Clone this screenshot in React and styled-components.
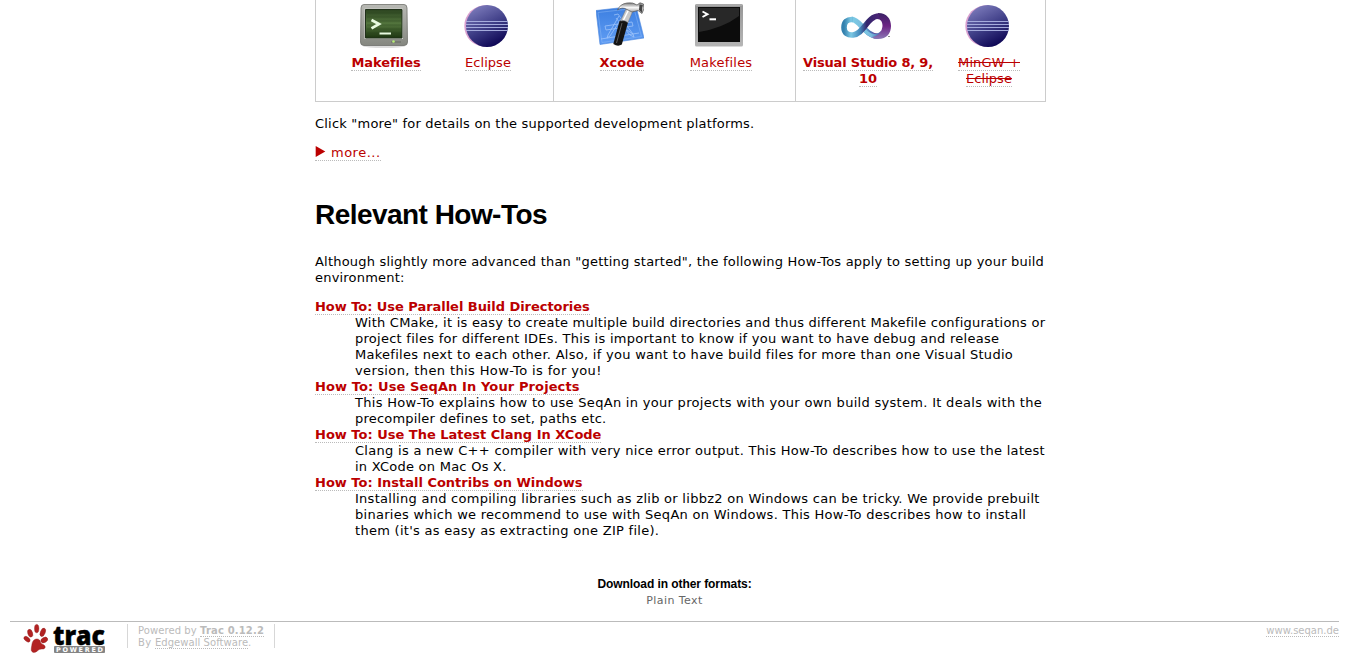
import React from 'react';
import styled, { createGlobalStyle } from 'styled-components';

const Global = createGlobalStyle`
  body { margin: 0; background: #fff; color: #000; font: 13px/16px "DejaVu Sans", Verdana, sans-serif; overflow: hidden; }
`;
const Page = styled.div`height: 667px; display: flex; flex-direction: column; overflow: hidden;`;
const Main = styled.main`width: 731px; margin-left: 315px;`;
const Platforms = styled.div`display: flex; box-sizing: border-box; height: 102px; border: 1px solid #ccc; border-top: 0;`;
const Cell = styled.div`
  display: flex; box-sizing: border-box; width: ${p => p.$w}px; padding: 1px 0 0 ${p => p.$pad}px;
  & + & { border-left: 1px solid #ccc; }
`;
const Item = styled.div`
  width: ${p => p.$w}px; text-align: center; flex: none;
  svg { display: block; margin: 0 auto 6px; position: relative; left: -2px; }
`;
const Row = styled.div`white-space: nowrap; height: 16px;`;
const Text = styled.span`letter-spacing: ${p => p.$ls || 0}px; white-space: pre;`;
const Link = styled.a`
  color: #b00; border-bottom: 1px dotted #bbb; white-space: pre;
  font-weight: ${p => (p.$bold ? 'bold' : 'normal')};
  letter-spacing: ${p => p.$ls || 0}px;
  text-decoration: ${p => (p.$gone ? 'line-through' : 'none')};
`;
const Para = styled.div`margin-top: ${p => p.$top}px;`;
const Title = styled.h1`margin: 38px 0 0; font: bold 28px/32px "Liberation Sans", Arial, sans-serif; letter-spacing: -0.54px; white-space: nowrap;`;
const List = styled.dl`margin: 13px 0 0;`;
const Term = styled.dt`height: 16px; white-space: nowrap;`;
const Desc = styled.dd`margin: 0 0 0 40px;`;
const Formats = styled.div`margin-top: 37px; text-align: center; height: 45px; font-size: 11px; color: #666;`;
const FormatsTitle = styled.h3`margin: 0 0 1px; color: #000; font: bold 12px/16px "Liberation Sans", Arial, sans-serif; letter-spacing: -0.07px;`;
const Footer = styled.footer`
  margin: 0 10px; border-top: 1px solid #bbb; display: flex; color: #bbb; font-size: 10px; line-height: 12px;
  a { color: #bbb; }
`;
const Logo = styled.div`width: 117px; height: 24px; margin-top: 2px; border-right: 1px solid #d7d7d7; svg { display: block; margin-left: 12px; overflow: visible; }`;
const Powered = styled.div`margin-top: 2px; height: 24px; box-sizing: border-box; padding: 1px 0 0 10px; width: 147px; border-right: 1px solid #d7d7d7;`;
const PoweredLine = styled.div`height: 12px; white-space: nowrap;`;
const Site = styled.div`margin: 3px 0 0 auto;`;

const Eclipse = () => (
  <svg width="48" height="48" viewBox="0 0 48 48">
    <defs><linearGradient id="ec" x1=".25" y1="0" x2=".75" y2="1"><stop offset="0" stopColor="#7d7cbc" /><stop offset=".5" stopColor="#403f88" /><stop offset="1" stopColor="#08004f" /></linearGradient></defs>
    <circle cx="23" cy="25" r="20.7" fill="#d9a0cf" /><circle cx="25" cy="25" r="21" fill="url(#ec)" />
    <path d="M4 20.5H46M4 23.5H46M4 26.5H46M4 29.5H46" stroke="#a5abdc" strokeWidth="1" />
  </svg>
);
const GreenTerminal = () => (
  <svg width="48" height="48" viewBox="0 0 48 48">
    <defs><linearGradient id="gf" x2="0" y2="1"><stop stopColor="#b8b9b4" /><stop offset="1" stopColor="#858780" /></linearGradient>
      <linearGradient id="gs" x2="0" y2="1"><stop stopColor="#2c4420" /><stop offset=".5" stopColor="#53753d" /><stop offset="1" stopColor="#1c3510" /></linearGradient></defs>
    <ellipse cx="24" cy="45" rx="21" ry="2" fill="#ddd" />
    <path d="M4 3.5H44Q47 3.5 47 7L47.5 41Q47.5 44.5 44 44.5H4Q.5 44.5 .5 41L1 7Q1 3.5 4 3.5Z" fill="url(#gf)" stroke="#70716c" strokeWidth=".8" />
    <path d="M4.5 7.5H43V38H4.5Z" fill="#d1d2ce" /><path d="M5.5 8.5H42V37H5.5Z" fill="url(#gs)" stroke="#20301a" />
    <path d="M7 12H41M7 16H41M7 20H41M7 24H41M7 28H41M7 32H41" stroke="#223d18" opacity=".3" />
    <path d="M11.5 19L19 23L11.5 27.3" fill="none" stroke="#e8fbe0" strokeWidth="2.7" /><path d="M19.5 32.5H31" stroke="#e8fbe0" strokeWidth="2" />
    <path d="M31 41H41" stroke="#777a72" strokeWidth="2" /><circle cx="33.5" cy="40.5" r="1.3" fill="#b6ef75" />
  </svg>
);
const Terminal = () => (
  <svg width="48" height="48" viewBox="0 0 48 48">
    <defs><linearGradient id="tf" x2="0" y2="1"><stop stopColor="#979797" /><stop offset="1" stopColor="#b5b5b5" /></linearGradient></defs>
    <rect y="3" width="48" height="42.5" rx="1.5" fill="url(#tf)" /><rect x="1" y="3.5" width="46" height="1" fill="#bbb" />
    <rect x="3" y="6" width="42" height="35" fill="#0c0c0c" /><path d="M4 31Q28 27 44 15V7H4Z" fill="#282828" />
    <path d="M7.5 10.5L12.5 13.2L7.5 16" fill="none" stroke="#fff" strokeWidth="1.9" /><path d="M14.5 18.3H21" stroke="#fff" strokeWidth="2" />
  </svg>
);
const Xcode = () => (
  <svg width="48" height="48" viewBox="0 0 48 48">
    <defs><linearGradient id="xb" x2="0" y2="1"><stop stopColor="#3b7ee0" /><stop offset="1" stopColor="#609df4" /></linearGradient>
      <linearGradient id="xh" x2="0" y2="1"><stop stopColor="#777" /><stop offset=".45" stopColor="#f8f8f8" /><stop offset="1" stopColor="#888" /></linearGradient></defs>
    <path d="M0 9.5L40 5L48 37L4 43.5Z" fill="url(#xb)" stroke="#4a84db" strokeWidth=".6" />
    <path d="M2 11.5L38 7.5L45.5 35.5L6 41.5Z" fill="none" stroke="#8db8f5" strokeWidth=".5" />
    <g fill="none" stroke="#b7d4ff" strokeWidth=".8" opacity=".75">
      <path d="M18 14L22 13L37 33M20 17L34 34M23 15L12 34L11 37L14 35L25 18" />
      <path d="M9 25L36 21L37 25L10 29ZM5 38L43 32M31 29L37 33L38 36L34 34" />
    </g>
    <path d="M23.5 20Q28 18 32 21.5L25.8 43.5Q22 46 17.3 43Z" fill="#151515" /><path d="M26 22L20.5 42" stroke="#5b5b5b" strokeWidth="1" />
    <path d="M30 8L37 9.5L32 21.5Q28 18.5 24.5 20Z" fill="#c9c9c9" stroke="#777" strokeWidth=".5" /><path d="M32.5 9L27.5 19" stroke="#fff" strokeWidth="1.5" />
    <path d="M21.5 9Q24 3 31 2Q37 1 41 4L44 1.8L47.5 3Q49 8 46 12.5L42 9.5L36 11L31 8.5Q26 5.5 21.5 9Z" fill="url(#xh)" stroke="#555" strokeWidth=".7" />
    <path d="M43.5 3.5L46.8 4L45.8 11.5L43 9Z" fill="#444" />
  </svg>
);
const VisualStudio = () => (
  <svg width="50" height="48" viewBox="0 0 50 48">
    <defs><linearGradient id="va"><stop stopColor="#3481ae" /><stop offset=".2" stopColor="#7bc8e4" /><stop offset=".45" stopColor="#448abc" /><stop offset=".65" stopColor="#33266d" /><stop offset="1" stopColor="#4b2476" /></linearGradient>
      <linearGradient id="vb"><stop stopColor="#7ccce6" /><stop offset=".4" stopColor="#79bcdc" /><stop offset=".7" stopColor="#4b79b9" /><stop offset="1" stopColor="#682f88" /></linearGradient>
      <linearGradient id="vc" x2="0" y2="1"><stop stopColor="#392265" /><stop offset=".5" stopColor="#6d2384" /><stop offset="1" stopColor="#8b78b5" /></linearGradient></defs>
    <path d="M11 18.5C19 18.5 24 35 37 35.2" fill="none" stroke="url(#vb)" strokeWidth="5.5" />
    <path d="M22 25C29 34 35 35 40 30L44 33C37 41 29 38 21 29Z" fill="url(#vb)" />
    <path d="M37 12C46 12 50 18 50 25C50 32 46 38 37 38C34 38 32 37 31 36C38 35 41 30 41.5 25C41.5 21 40 18 36 18Z" fill="url(#vc)" />
    <path d="M12 18.5C6 18 3 21 3 26.5C3 32 7 34.5 12 34C23 33 26 15 38 15" fill="none" stroke="url(#va)" strokeWidth="5.6" />
    <path d="M47 35.5H49" stroke="#888" />
  </svg>
);
const TracLogo = () => (
  <svg width="84" height="31" viewBox="0 0 84 31">
    <g fill="#b22222" stroke="#8f1a1a" strokeWidth=".4">
      <ellipse cx="8.2" cy="9.2" rx="2.4" ry="4" transform="rotate(-17 8.2 9.2)" /><ellipse cx="14.7" cy="4.6" rx="2.2" ry="4.2" />
      <ellipse cx="5" cy="15.2" rx="2.1" ry="3.6" transform="rotate(-50 5 15.2)" /><ellipse cx="20.8" cy="8.3" rx="2.4" ry="4.4" transform="rotate(22 20.8 8.3)" />
      <ellipse cx="22.3" cy="16" rx="3.6" ry="2.5" transform="rotate(-28 22.3 16)" />
      <path d="M10 20C10.5 15.5 15 13.5 17.5 16C19 17.5 18 19.5 21 20.5C24.5 22 23.5 25.5 20 25C16 24.5 15 29 11.5 28.4C8 27.5 9.5 24 10 20Z" />
    </g>
    <text x="31" y="21" fontFamily="Open Sans, sans-serif" fontWeight="800" fontSize="27" stroke="#000" strokeWidth=".4" textLength="52" lengthAdjust="spacingAndGlyphs">trac</text>
    <rect x="32" y="22" width="51" height="7" rx="1" fill="#858585" />
    <text x="34" y="28" fill="#fff" fontFamily="DejaVu Sans, sans-serif" fontWeight="bold" fontSize="6.5" textLength="47">POWERED</text>
  </svg>
);

const howTos = [
  { title: 'How To: Use Parallel Build Directories', ls: -0.04, lines: [
    ['With CMake, it is easy to create multiple build directories and thus different Makefile configurations or', 0.238],
    ['project files for different IDEs. This is important to know if you want to have debug and release', 0.264],
    ['Makefiles next to each other. Also, if you want to have build files for more than one Visual Studio', 0.28],
    ['version, then this How-To is for you!', 0.38]] },
  { title: 'How To: Use SeqAn In Your Projects', ls: 0.11, lines: [
    ['This How-To explains how to use SeqAn in your projects with your own build system. It deals with the', 0.3],
    ['precompiler defines to set, paths etc.', 0.2]] },
  { title: 'How To: Use The Latest Clang In XCode', ls: 0, lines: [
    ['Clang is a new C++ compiler with very nice error output. This How-To describes how to use the latest', 0.29],
    ['in XCode on Mac Os X.', 0.25]] },
  { title: 'How To: Install Contribs on Windows', ls: 0, lines: [
    ['Installing and compiling libraries such as zlib or libbz2 on Windows can be tricky. We provide prebuilt', 0.275],
    ['binaries which we recommend to use with SeqAn on Windows. This How-To describes how to install', 0.28],
    ["them (it's as easy as extracting one ZIP file).", 0.28]] },
];

export default function App() {
  return (
    <Page>
      <Global />
      <Main>
        <Platforms>
          <Cell $w={237} $pad={19}>
            <Item $w={102}><GreenTerminal /><Link $bold $ls={-0.1}>Makefiles</Link></Item>
            <Item $w={102}><Eclipse /><Link $ls={0.05}>Eclipse</Link></Item>
          </Cell>
          <Cell $w={242} $pad={18}>
            <Item $w={100}><Xcode /><Link $bold>Xcode</Link></Item>
            <Item $w={98}><Terminal /><Link $ls={0.2}>Makefiles</Link></Item>
          </Cell>
          <Cell $w={250} $pad={4}>
            <Item $w={136}><VisualStudio /><Link $bold $ls={-0.2}>Visual Studio 8, 9,</Link><br /><Link $bold>10</Link></Item>
            <Item $w={106}><Eclipse /><Link $gone $ls={0.13}>MinGW +</Link><br /><Link $gone $ls={0.05}>Eclipse</Link></Item>
          </Cell>
        </Platforms>
        <Para $top={14}><Row><Text $ls={0.203}>Click "more" for details on the supported development platforms.</Text></Row></Para>
        <Para $top={13}><Row><Link $ls={0.5}><svg width="16" height="11"><path d="M.7 0L10.3 5.5L.7 11Z" fill="#b00" /></svg>more...</Link></Row></Para>
        <Title>Relevant How-Tos</Title>
        <Para $top={23}>
          <Row><Text $ls={0.204}>Although slightly more advanced than "getting started", the following How-Tos apply to setting up your build</Text></Row>
          <Row><Text $ls={0.2}>environment:</Text></Row>
        </Para>
        <List>
          {howTos.map(h => (
            <React.Fragment key={h.title}>
              <Term><Link $bold $ls={h.ls}>{h.title}</Link></Term>
              <Desc>{h.lines.map(([text, ls]) => <Row key={text}><Text $ls={ls}>{text}</Text></Row>)}</Desc>
            </React.Fragment>
          ))}
        </List>
      </Main>
      <Formats><FormatsTitle>Download in other formats:</FormatsTitle><Text $ls={0.42}>Plain Text</Text></Formats>
      <Footer>
        <Logo><TracLogo /></Logo>
        <Powered>
          <PoweredLine><Text $ls={0.08}>Powered by </Text><Link $bold $ls={0.16}>Trac 0.12.2</Link></PoweredLine>
          <PoweredLine><Text $ls={0.33}>By </Text><Link $ls={0.05}>Edgewall Software</Link>.</PoweredLine>
        </Powered>
        <Site><Link>www.seqan.de</Link></Site>
      </Footer>
    </Page>
  );
}
